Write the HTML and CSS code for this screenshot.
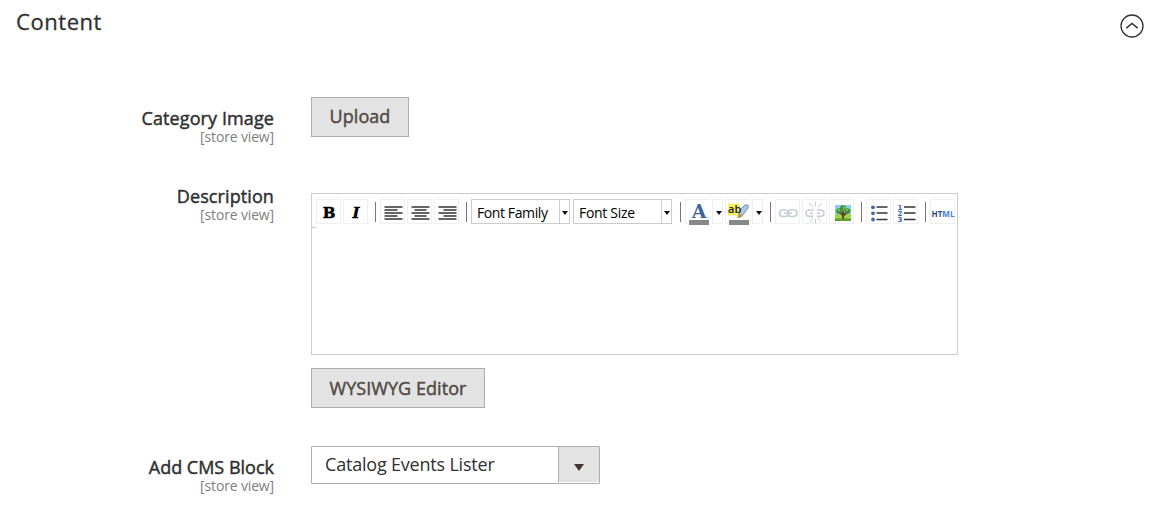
FILE: index.html
```
<!DOCTYPE html>
<html lang="en">
<head>
<meta charset="utf-8">
<title>Content</title>
<link rel="stylesheet" href="styles.css">
</head>
<body>
<header class="section-head">
  <h2 class="section-title">Content</h2>
  <svg class="collapse" width="24" height="24" viewBox="0 0 24 24"><circle cx="12" cy="12" r="11" fill="none" stroke="#333" stroke-width="1.3"/><path d="M6.3 14.2 12 9.5l5.7 4.7" fill="none" stroke="#333" stroke-width="1.5"/></svg>
</header>
<main class="form">
  <div class="field field-image">
    <div class="label"><span class="name n-image">Category Image</span><span class="scope">[store view]</span></div>
    <div class="control"><button class="btn btn-upload">Upload</button></div>
  </div>
  <div class="field field-description">
    <div class="label"><span class="name n-desc">Description</span><span class="scope">[store view]</span></div>
    <div class="control">
      <div class="editor">
        <div class="toolbar">
          <div class="tool"><svg viewBox="0 0 23 23"><text x="12" y="18" class="glyph-b" text-anchor="middle">B</text></svg></div>
          <div class="tool"><svg viewBox="0 0 23 23"><text x="12" y="18" class="glyph-i" text-anchor="middle">I</text></svg></div>
          <i class="sep"></i>
          <div class="tool"><svg viewBox="0 0 23 23"><path class="lines" d="M3.500 7h18M3.500 10h13M3.500 13h18M3.500 16h13M3.500 19h18" /></svg></div>
          <div class="tool"><svg viewBox="0 0 23 23"><path class="lines" d="M3.500 7h18M6.500 10h12M3.500 13h18M6.500 16h12M3.500 19h18" /></svg></div>
          <div class="tool"><svg viewBox="0 0 23 23"><path class="lines" d="M3.500 7h18M8.500 10h13M3.500 13h18M8.500 16h13M3.500 19h18" /></svg></div>
          <i class="sep"></i>
          <div class="picker"><span class="picker-text t-family">Font Family</span><span class="picker-arrow"></span></div>
          <div class="picker"><span class="picker-text t-size">Font Size</span><span class="picker-arrow"></span></div>
          <i class="sep"></i>
          <div class="tool color"><svg viewBox="0 0 23 23"><text x="13" y="18" class="glyph-a" text-anchor="middle">A</text></svg><b class="swatch"></b></div>
          <div class="drop"></div>
          <div class="tool color"><svg viewBox="0 0 23 23"><path d="M2 3.500h12v12H2z" fill="#f5ee66"/><path d="m13 15 1-5 5-5h3v3l-6 8z" fill="#b4c9e3" stroke="#7189b0"/><path d="m11 18 2-5 4 3-3 2z" fill="#b99f48"/><text x="2" y="13" class="glyph-ab">ab</text></svg><b class="swatch"></b></div>
          <div class="drop"></div>
          <i class="sep"></i>
          <div class="tool"><svg viewBox="0 0 23 23"><g class="chain"><rect x="3.500" y="10" width="9" height="6.500" rx="3.200"/><rect x="12" y="10" width="9" height="6.500" rx="3.200"/><path d="M8 13.200h8"/></g></svg></div>
          <div class="tool"><svg viewBox="0 0 23 23"><g class="chain"><path d="M11 10H7q-4 0-4 3.200t4 3.200h3M14 10h3q4 0 4 3.200t-4 3.200h-3M7 13.200h3M14 13.200h3"/><path class="rays" d="m10 7-4-4M12.500 6V2M15 7l4-4M10 18l-3 4M12.500 19v4M15 18l3 4"/></g></svg></div>
          <div class="tool"><svg viewBox="0 0 23 23"><path d="M5 5h16v9H5z" fill="#8fcdf0"/><path d="M5 14h16v7H5z" fill="#9bd34d"/><path d="M5 18.500h16V21H5z" fill="#5d9e2c"/><path d="M13 11v8M13 16l4-4M13 15l-4-3" stroke="#5f3d20" stroke-width="1.800"/><g fill="#3c8a2e"><circle cx="9" cy="11" r="2.800"/><circle cx="13" cy="8" r="2.800"/><circle cx="17.500" cy="11" r="2.800"/></g><g fill="#79b946"><circle cx="9" cy="10" r="1.500"/><circle cx="14" cy="8" r="1.600"/><circle cx="17" cy="10" r="1.400"/></g></svg></div>
          <i class="sep"></i>
          <div class="tool"><svg viewBox="0 0 23 23"><path class="lines" d="M9.500 7H20.500M9.500 13H20.500M9.500 19.500H20.500"/><g fill="#4569a8"><circle cx="6" cy="7.300" r="1.900"/><circle cx="6" cy="13.300" r="1.900"/><circle cx="6" cy="19.500" r="1.900"/></g></svg></div>
          <div class="tool"><svg viewBox="0 0 23 23"><path class="lines" d="M10 7H21.500M10 13H21.500M10 19.500H21.500"/><g class="nums"><text x="3.500" y="10">1</text><text x="3.500" y="16">2</text><text x="3.500" y="22">3</text></g></svg></div>
          <i class="sep"></i>
          <div class="tool"><svg viewBox="0 0 23 23"><text x="0.500" y="16.500" class="glyph-html" fill="url(#html-ink)" textLength="23" lengthAdjust="spacingAndGlyphs">HTML</text><defs><linearGradient id="html-ink"><stop offset=".45" stop-color="#264d84"/><stop offset=".55" stop-color="#4b7ed6"/></linearGradient></defs></svg></div>
        </div>
        <div class="toolbar-edge"></div>
      </div>
      <button class="btn btn-editor">WYSIWYG Editor</button>
    </div>
  </div>
  <div class="field field-block">
    <div class="label"><span class="name n-block">Add CMS Block</span><span class="scope">[store view]</span></div>
    <div class="control"><div class="select"><span class="select-text">Catalog Events Lister</span><span class="select-arrow"></span></div></div>
  </div>
</main>
</body>
</html>
```
FILE: styles.css
```
* { box-sizing: border-box; }
body { margin: 0; background: #fff; color: #303030; font-family: "Open Sans", sans-serif; height: 508px; overflow: hidden; }
.section-head { display: flex; justify-content: space-between; height: 97px; padding: 0 12px 0 16px; }
.section-title { margin: 6px 0 0; font-size: 22px; line-height: 30px; font-weight: 400; letter-spacing: .55px; -webkit-text-stroke: .3px; }
.collapse { margin-top: 14px; }
.field { display: flex; }
.field-image { height: 96px; }
.field-description { height: 253px; }
.label { width: 274px; margin-right: 37px; display: flex; flex-direction: column; align-items: flex-end; }
.field-image .label { padding-top: 10px; }
.field-description .label { margin-top: -8px; }
.field-block .label { padding-top: 10px; }
.name { font-size: 18px; line-height: 22px; font-weight: 400; -webkit-text-stroke: .45px; letter-spacing: .1px; white-space: nowrap; }
.n-block { letter-spacing: 0; }
.scope { font-size: 14px; line-height: 16px; color: #808080; letter-spacing: -.15px; }
.btn { display: block; height: 40px; padding: 0 0 2px; border: 1px solid #adadad; background: #e3e3e3; color: #514943; font: 400 18px/36px "Open Sans", sans-serif; -webkit-text-stroke: .45px; letter-spacing: .05px; white-space: nowrap; }
.btn-upload { width: 98px; }
.btn-editor { width: 174px; margin-top: 13px; padding: 0; }
.editor { width: 647px; height: 162px; border: 1px solid #ccc; }
.toolbar { display: flex; gap: 2px; height: 33px; padding: 5px 0 0 4px; }
.toolbar-edge { width: 4px; height: 1px; background: #ccc; }
.tool { flex: 0 0 25px; height: 25px; border: 1px solid #f0f0f0; position: relative; }
.tool svg { display: block; width: 23px; height: 23px; overflow: visible; }
.sep { flex: 0 0 8px; height: 20px; margin-top: 3px; background: linear-gradient(#777587, #777587) 5px 0 / 1px 20px no-repeat; }
.lines { stroke: #333; stroke-width: 1.5; fill: none; }
.picker { flex: 0 0 99px; margin-right: 1px; height: 25px; border: 1px solid #ccc; display: flex; justify-content: space-between; color: #000; }
.picker-text { padding-left: 5px; font: 14px/25px "Open Sans", sans-serif; letter-spacing: -.4px; white-space: nowrap; }
.t-size { letter-spacing: -.3px; }
.picker-arrow { width: 10px; border-left: 1px solid #ccc; display: flex; align-items: center; justify-content: center; padding: 2px 0 0 1px; }
.picker-arrow::after, .drop::after { content: ""; flex: none; border: 3.5px solid transparent; border-top: 4px solid #111; border-bottom: 0; }
.drop { flex: 0 0 11px; height: 25px; border: 1px solid #f0f0f0; display: flex; align-items: center; justify-content: center; padding: 2px 0 0 2px; }
.color { border-right-color: transparent; }
.swatch { position: absolute; left: 3px; top: 20px; width: 20px; height: 5px; background: #888; }
.glyph-b { font: bold 15px "DejaVu Serif", serif; stroke: #000; stroke-width: .5px; }
.glyph-i { font: italic bold 15px "DejaVu Serif", serif; stroke: #000; stroke-width: .3px; }
.glyph-a { font: bold 19px "DejaVu Serif", serif; fill: #3b62a0; }
.glyph-ab { font: 600 11px "Open Sans", sans-serif; fill: #222; }
.glyph-html { font: bold 9px "Open Sans", sans-serif; }
.chain { fill: none; stroke: #c5ced9; stroke-width: 1.6; }
.rays { stroke-width: 1; }
.nums { font: bold 7px "DejaVu Sans", sans-serif; fill: #3565bd; }
.select { width: 289px; height: 38px; border: 1px solid #adadad; display: flex; justify-content: space-between; border-radius: 1px; }
.select-text { padding-left: 13px; font-size: 18px; line-height: 35px; letter-spacing: -.2px; white-space: nowrap; }
.select-arrow { width: 41px; height: 35px; border-left: 1px solid #adadad; background: #e3e3e3; display: flex; align-items: center; justify-content: center; }
.select-arrow::after { content: ""; border: 5px solid transparent; border-top: 7px solid #41362f; border-bottom: 0; margin-top: 6px; }
```
